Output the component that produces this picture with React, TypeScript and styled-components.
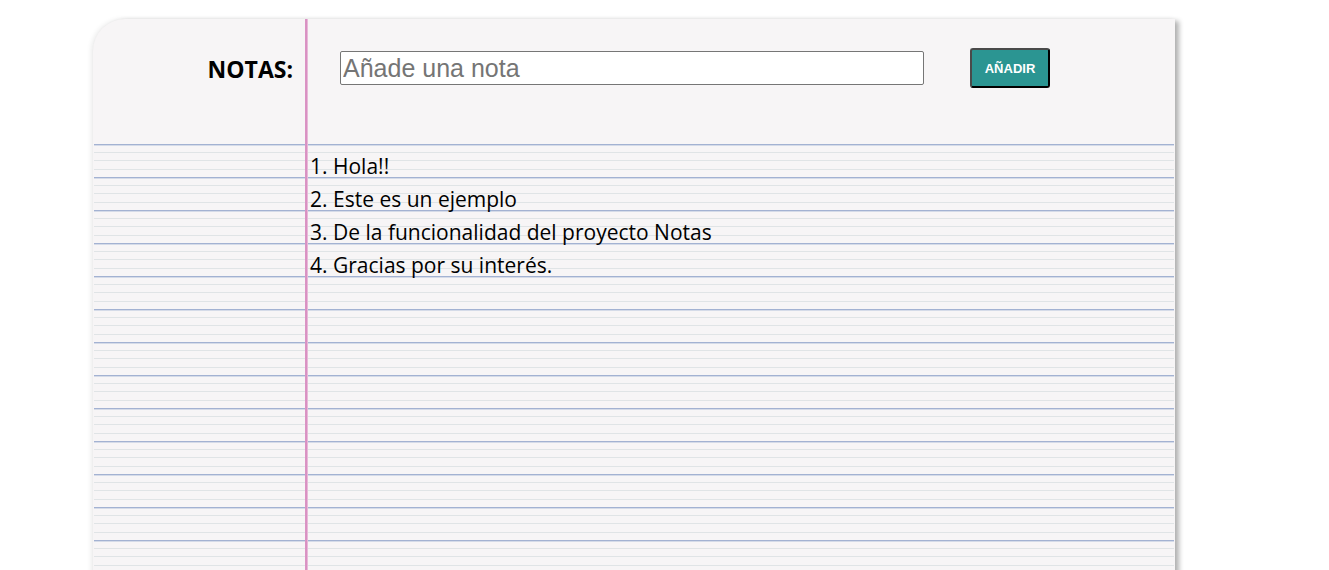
import { FC, useState } from "react";

import styled, { createGlobalStyle } from "styled-components";

const notes = [
  "Hola!!",
  "Este es un ejemplo",
  "De la funcionalidad del proyecto Notas",
  "Gracias por su interés.",
];

const GlobalStyle = createGlobalStyle`
  html, body {
    margin: 0;
    padding: 0;
    background: #ffffff;
    overflow: hidden;
  }
`;

const App: FC = () => {
  const [text, setText] = useState("");

  return (
    <>
      <GlobalStyle />
      <Page>
        <Notebook>
          <Header>
            <Label>NOTAS:</Label>

            <Form onSubmit={(event) => event.preventDefault()}>
              <NoteInput
                placeholder="Añade una nota"
                value={text}
                onChange={(event) => setText(event.target.value)}
              />
              <AddButton type="submit">AÑADIR</AddButton>
            </Form>
          </Header>

          <Lined>
            {notes.map((note, idx) => (
              <NoteRow key={idx}>
                {idx + 1}. {note}
              </NoteRow>
            ))}
          </Lined>
        </Notebook>
      </Page>
    </>
  );
};

const Page = styled.div`
  padding: 19px 0 0 93px;
  height: 570px;
  box-sizing: border-box;
`;

const Notebook = styled.div`
  width: 1082px;
  height: 600px;

  background:
    linear-gradient(
      to right,
      transparent 212px,
      #db95c5 212px,
      #d88fc1 214px,
      #e8b8d8 214px,
      #e8b8d8 215px,
      transparent 215px
    ),
    #f7f5f6;
  border-top-left-radius: 32px;
  box-shadow:
    4px 2px 5px rgba(0, 0, 0, 0.3),
    -2px 0 5px rgba(0, 0, 0, 0.08);
`;

const Header = styled.div`
  height: 125px;
  box-sizing: border-box;
  padding-top: 29px;

  display: grid;
  grid-template-columns: 212px 1fr;
  align-items: start;
`;

const Label = styled.h1`
  margin: 0;
  padding-right: 12px;
  height: 40px;
  line-height: 43px;
  text-align: right;

  font-family: "Open Sans", "Noto Sans", sans-serif;
  font-size: 23px;
  font-weight: 700;
  color: #000000;
`;

const Form = styled.form`
  padding-left: 35px;

  display: flex;
  align-items: center;
  gap: 46px;
`;

const NoteInput = styled.input`
  width: 584px;
  height: 34px;
  box-sizing: border-box;
  padding: 1px 2px;

  border: 1px solid #767676;
  border-radius: 2px;
  background: #ffffff;

  font-family: "Liberation Sans", Arial, sans-serif;
  font-size: 25px;
  color: #000000;

  &::placeholder {
    color: #757575;
  }
`;

const AddButton = styled.button`
  width: 80px;
  height: 40px;

  background: #2b9592;
  border: 2px outset #4a4a4a;
  border-right-color: #000000;
  border-bottom-color: #000000;
  border-radius: 3px;

  font-family: "Liberation Sans", Arial, sans-serif;
  font-size: 13px;
  font-weight: 700;
  color: #ffffff;
  cursor: pointer;
`;

/* ruled paper: one 33px tile per writing line, repeated down the page */
const Lined = styled.div`
  margin: 0 1px;
  height: 460px;

  background-image:
    linear-gradient(
      to right,
      transparent 211px,
      #db95c5 211px,
      #d88fc1 213px,
      #e8b8d8 213px,
      #e8b8d8 214px,
      transparent 214px
    ),
    linear-gradient(
      to bottom,
      #a3b2d2 0px,
      #a3b2d2 1px,
      #d5dbe8 1px,
      #d5dbe8 2px,
      transparent 2px,
      transparent 8px,
      #e0e4e6 8px,
      #e0e4e6 9px,
      transparent 9px,
      transparent 16px,
      #e0e4e6 16px,
      #e0e4e6 17px,
      transparent 17px,
      transparent 25px,
      #e0e4e6 25px,
      #e0e4e6 26px,
      transparent 26px,
      transparent 33px
    );
  background-size: 100% 100%, 100% 33px;
  background-repeat: no-repeat, repeat-y;
`;

const NoteRow = styled.div`
  height: 33px;
  box-sizing: border-box;
  padding-left: 216px;

  display: flex;
  align-items: flex-end;

  font-family: "Open Sans", "Noto Sans", sans-serif;
  font-size: 21px;
  line-height: 21px;
  color: #000000;
`;

export default App;
